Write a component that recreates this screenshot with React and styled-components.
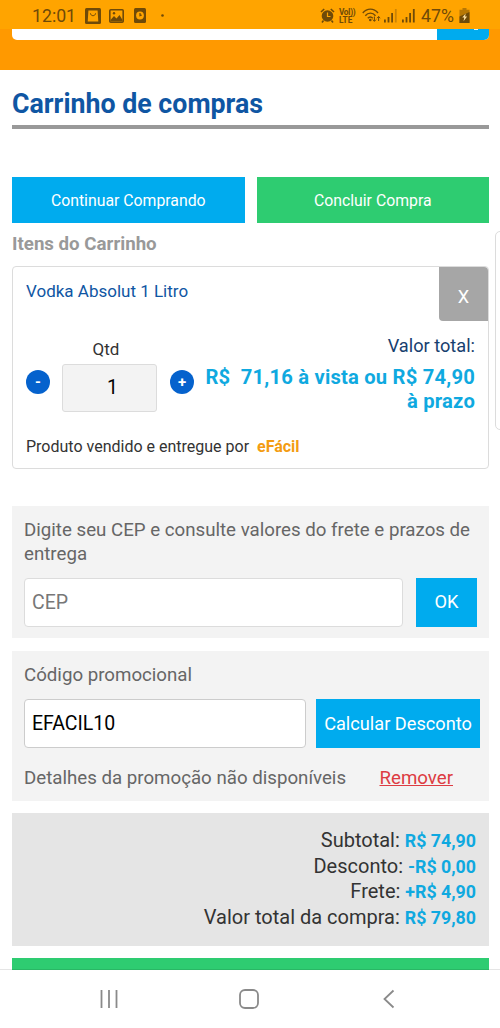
import React, { Component } from 'react';
import styled, { createGlobalStyle } from 'styled-components';

const theme = {
    colors: {
        statusBar: '#ffa400',
        header: '#ff9900',
        sky: '#00abee',
        price: '#0fa9e0',
        blue: '#0f56a3',
        round: '#0562cd',
        green: '#2ecc71',
        panel: '#f3f3f3',
        summary: '#e5e5e5',
        border: '#dcdcdc',
        text: '#666',
        dark: '#333',
        ink: '#6f4a08',
    },
};

const GlobalStyle = createGlobalStyle`
    * {
        box-sizing: border-box;
    }

    body {
        margin: 0;
        background: #fff;
        font-family: Roboto, 'Liberation Sans', sans-serif;
    }

    button,
    input {
        font-family: inherit;
    }
`;

const Screen = styled.div`
    position: relative;
    display: flex;
    flex-direction: column;
    width: 500px;
    height: 1028px;
    overflow: hidden;
    background: #fff;
`;

const StatusBar = styled.div`
    display: flex;
    align-items: center;
    flex: none;
    height: 29px;
    padding: 2px 30px 0 32px;
    background: ${theme.colors.statusBar};
    color: ${theme.colors.ink};
`;

const StatusText = styled.span`
    width: ${props => props.$width}px;
    margin-left: ${props => props.$gap || 0}px;
    font-size: 17.7px;
    font-weight: ${props => props.$weight || 300};
    line-height: 20px;
    white-space: nowrap;
`;

const StatusIcon = styled.svg`
    display: block;
    flex: none;
    margin-left: ${props => props.$gap || 0}px;
`;

const Volte = styled.span`
    width: 17px;
    margin-left: 4px;
    font-size: 8.3px;
    font-weight: 700;
    line-height: 8px;
    letter-spacing: -0.4px;
    white-space: nowrap;
`;

const VolteLine = styled.span`
    display: block;
    height: 8px;
    letter-spacing: ${props => props.$spacing}px;
`;

const Spacer = styled.div`
    flex: 1;
`;

const Header = styled.header`
    flex: none;
    height: 41px;
    padding: 0 11px 0 12px;
    background: ${theme.colors.header};
`;

const SearchBar = styled.div`
    display: flex;
    justify-content: flex-end;
    height: 11px;
    overflow: hidden;
    border-radius: 0 0 5px 5px;
    background: #fff;
`;

const SearchButton = styled.div`
    display: flex;
    justify-content: center;
    width: 52px;
    padding-left: 26px;
    background: ${theme.colors.sky};

    &::before {
        content: '';
        width: 4px;
        height: 1px;
        background: #d9f2fd;
    }
`;

const Content = styled.main`
    display: flex;
    flex-direction: column;
    flex: none;
    height: 900px;
    padding: 0 11px 0 12px;
    overflow: hidden;
`;

const Title = styled.h1`
    margin: 0;
    padding-top: 19px;
    height: 59px;
    flex: none;
    border-bottom: 4px solid #999;
    color: ${theme.colors.blue};
    font-size: 26.75px;
    font-weight: 700;
    line-height: 30px;
`;

const Actions = styled.div`
    display: grid;
    grid-template-columns: 1fr 1fr;
    gap: 12px;
    margin-top: 48px;
`;

const Button = styled.button`
    display: flex;
    align-items: center;
    justify-content: center;
    flex: none;
    width: ${props => (props.$width ? `${props.$width}px` : 'auto')};
    height: ${props => props.$height || 46}px;
    padding: 0 0 ${props => props.$lift || 0}px;
    border: none;
    background: ${props => (props.$green ? theme.colors.green : theme.colors.sky)};
    color: #fff;
    font-size: ${props => props.$size || 15.8}px;
    white-space: nowrap;
`;

const SectionTitle = styled.h2`
    margin: 10px 0 11px;
    color: #999;
    font-size: 18.7px;
    font-weight: 700;
    line-height: 22px;
`;

const Card = styled.section`
    display: flex;
    flex-direction: column;
    flex: none;
    height: 203px;
    border: 1px solid ${theme.colors.border};
    border-radius: 4px;
`;

const CardTop = styled.div`
    display: flex;
    justify-content: space-between;
    padding-left: 13px;
`;

const ProductName = styled.a`
    margin-top: 14px;
    color: ${theme.colors.blue};
    font-size: 17px;
    line-height: 20px;
`;

const RemoveItem = styled.button`
    width: 49px;
    height: 54px;
    padding: 4px 0 0;
    border: none;
    border-radius: 0 4px 0 4px;
    background: #a6a6a6;
    color: #fff;
    font-size: 18.2px;
`;

const CardMiddle = styled.div`
    display: flex;
    justify-content: space-between;
    height: 104px;
    padding: 0 13px;
`;

const Quantity = styled.div`
    display: flex;
    align-items: center;
    flex: none;
    width: 169px;
    height: 48px;
    margin-top: 43px;
`;

const QuantityField = styled.div`
    width: 95px;
    margin: -26px 13px 0 12px;
`;

const QuantityLabel = styled.label`
    display: block;
    padding: 0 7px 1px 0;
    color: ${theme.colors.dark};
    font-size: 17px;
    line-height: 20px;
    text-align: center;
`;

const QuantityInput = styled.input`
    display: block;
    width: 95px;
    height: 48px;
    margin-top: 4px;
    padding: 0 0 0 6px;
    border: 1px solid ${theme.colors.border};
    border-radius: 3px;
    background: #f3f3f3;
    color: #000;
    font-size: 19.5px;
    text-align: center;
`;

const RoundButton = styled.button`
    flex: none;
    width: 24px;
    height: 24px;
    margin-top: -12px;
    padding: 0;
    border: none;
    border-radius: 50%;
    background: ${theme.colors.round};
    color: #fff;
    font-size: 15px;
    font-weight: 700;
    line-height: 23px;
`;

const Total = styled.div`
    width: 280px;
    margin-top: 14px;
    color: #17406f;
    font-size: 18.2px;
    line-height: 22px;
    text-align: right;
`;

const TotalPrice = styled.div`
    margin-top: 8px;
    color: ${theme.colors.price};
    font-size: 20.2px;
    letter-spacing: 0.2px;
    font-weight: 700;
    line-height: 24px;
`;

const Seller = styled.p`
    margin: 12px 0 0 13px;
    color: ${theme.colors.dark};
    font-size: 16px;
    line-height: 20px;

    strong {
        margin-left: 4px;
        color: #f39c12;
    }
`;

const Panel = styled.section`
    flex: none;
    height: ${props => props.$height}px;
    margin-top: ${props => props.$top}px;
    padding: 12px 9px 0 12px;
    background: ${theme.colors.panel};
    color: ${theme.colors.text};
    font-size: 18.7px;
    line-height: 24px;
`;

const FieldRow = styled.div`
    display: flex;
    justify-content: space-between;
    margin-top: 12px;
    padding-right: ${props => props.$right || 0}px;
`;

const Field = styled.input`
    width: ${props => props.$width}px;
    height: 49px;
    padding: 0 7px 1px;
    border: 1px solid ${props => (props.$strong ? '#ccc' : theme.colors.border)};
    border-radius: 4px;
    background: #fff;
    color: #000;
    font-size: 19.5px;

    &::placeholder {
        color: #777;
        opacity: 1;
    }
`;

const PromoDetails = styled.div`
    display: flex;
    justify-content: space-between;
    margin-top: 18px;
    padding-right: 27px;
    white-space: nowrap;
`;

const RemoveLink = styled.a`
    color: #dd3c42;
    text-decoration: underline;
`;

const Summary = styled.section`
    flex: none;
    height: 133px;
    margin-top: 12px;
    padding: 15px 13px 0 0;
    background: ${theme.colors.summary};
    color: ${theme.colors.dark};
    font-size: 20px;
    line-height: 25.5px;
    text-align: right;

    strong {
        color: ${theme.colors.price};
        font-size: 17.8px;
    }
`;

const Checkout = styled.div`
    flex: none;
    height: 46px;
    margin-top: 12px;
    background: ${theme.colors.green};
`;

const NextCard = styled.div`
    position: absolute;
    top: 231px;
    left: 495px;
    width: 20px;
    height: 199px;
    border: 1px solid ${theme.colors.border};
    border-radius: 5px;
    background: #fff;
`;

const NavBar = styled.nav`
    display: flex;
    align-items: center;
    justify-content: space-between;
    flex: 1;
    padding: 0 101px 0 99px;
    box-shadow: 0 -1px 0 rgba(0, 0, 0, 0.1);
    background: #fff;
    z-index: 1;
`;

const NavIcon = styled.svg`
    display: block;
    fill: none;
    stroke: #8a8a8a;
    stroke-width: 1.8;
`;

const totals = [
    { label: 'Subtotal:', value: 'R$ 74,90' },
    { label: 'Desconto:', value: '-R$ 0,00' },
    { label: 'Frete:', value: '+R$ 4,90' },
    { label: 'Valor total da compra:', value: 'R$ 79,80' },
];

const Signal = ({ gap, faded }) => (
    <StatusIcon $gap={gap} width="14" height="15" viewBox="0 0 14 15">
        <g fill={theme.colors.ink}>
            <rect x="0" y="11.5" width="1.8" height="3" />
            <rect x="3.6" y="9" width="1.8" height="5.5" />
            <rect x="7.2" y="5" width="1.8" height="9.5" />
            <rect x="10.9" y="1" width="1.8" height="13.5" opacity={faded ? 0.35 : 1} />
        </g>
    </StatusIcon>
);

const StatusIcons = () => {
    const { ink, statusBar } = theme.colors;
    return (
        <StatusBar>
            <StatusText $width={53} $weight={400}>
                12:01
            </StatusText>
            <StatusIcon width="16" height="16" viewBox="0 0 16 16">
                <rect width="16" height="16" rx="1.5" fill={ink} />
                <path d="M3.4 2.6h9.2l.7 10.8H2.7z" fill={statusBar} />
                <path d="M5.4 5.3c.4 3.2 4.8 3.2 5.2 0" fill="none" stroke={ink} strokeWidth="1" />
            </StatusIcon>
            <StatusIcon $gap={8} width="15" height="14" viewBox="0 0 15 14">
                <rect x=".8" y=".8" width="13.4" height="12.4" rx="1" fill="none" stroke={ink} strokeWidth="1.6" />
                <path d="M1.5 11 5 7l2.5 2.6L10.5 6l3 5v1.5h-12z" fill={ink} />
                <circle cx="5" cy="4.2" r="1.2" fill={ink} />
            </StatusIcon>
            <StatusIcon $gap={10} width="12" height="15" viewBox="0 0 12 15">
                <rect width="12" height="15" rx="1.5" fill={ink} />
                <circle cx="6" cy="7.5" r="3.9" fill={statusBar} />
                <path d="M6 5v2.6l1.8-.6" fill="none" stroke={ink} strokeWidth="1.2" />
            </StatusIcon>
            <StatusIcon $gap={15} width="3" height="3" viewBox="0 0 3 3">
                <circle cx="1.5" cy="1.5" r="1.3" fill={ink} />
            </StatusIcon>
            <Spacer />
            <StatusIcon width="15" height="15" viewBox="0 0 15 15">
                <path d="M1 4 4.2 1M14 4l-3.2-3M3.5 12.5 2 14.4M11.5 12.5l1.5 1.9" stroke={ink} strokeWidth="1.6" />
                <circle cx="7.5" cy="8" r="5.8" fill={ink} />
                <path d="M7.5 4.5v4h3" fill="none" stroke={statusBar} strokeWidth="1.2" />
            </StatusIcon>
            <Volte>
                <VolteLine $spacing={-0.4}>VoI))</VolteLine>
                <VolteLine $spacing={0}>LTE</VolteLine>
            </Volte>
            <StatusIcon $gap={6} width="19" height="15" viewBox="0 0 19 15">
                <g fill="none" stroke={ink} strokeWidth="1.4">
                    <path d="M.8 5C5-.2 11.8-.2 16 5M3.3 7.8c2.8-3.6 7.4-3.6 10.2 0M5.8 10.2c1.5-1.7 3.5-1.7 5 0" />
                    <path d="M12.4 8.5v4.8m-1.6-1.7 1.6 1.7 1.6-1.7M16.6 13V8.5M15 10.2l1.6-1.7 1.6 1.7" strokeWidth="1" />
                </g>
                <circle cx="8.3" cy="12" r="1.3" fill={ink} />
            </StatusIcon>
            <Signal gap={3} faded />
            <Signal gap={4} />
            <StatusText $width={35} $gap={5} $weight={400}>
                47%
            </StatusText>
            <StatusIcon $gap={3} width="11" height="15" viewBox="0 0 10 15">
                <path d="M3 0h4v1.8h3V15H0V1.8h3z" fill={ink} opacity=".5" />
                <path d="M0 8.5 10 4v11H0z" fill={ink} />
                <path d="M6.2 5.5 2.8 9.6h2l-.8 3.6 3.6-4.8h-2z" fill="#ffe0a0" />
            </StatusIcon>
        </StatusBar>
    );
};

export default class App extends Component {
    state = { quantity: 1, cep: '', promo: 'EFACIL10' };

    handleStep = step => () => {
        this.setState(({ quantity }) => ({ quantity: Math.max(1, quantity + step) }));
    };

    handleChange = name => event => {
        this.setState({ [name]: event.target.value });
    };

    render() {
        const { quantity, cep, promo } = this.state;
        return (
            <Screen>
                <GlobalStyle />
                <StatusIcons />
                <Header>
                    <SearchBar>
                        <SearchButton />
                    </SearchBar>
                </Header>
                <Content>
                    <Title>Carrinho de compras</Title>
                    <Actions>
                        <Button>Continuar Comprando</Button>
                        <Button $green>Concluir Compra</Button>
                    </Actions>
                    <SectionTitle>Itens do Carrinho</SectionTitle>
                    <Card>
                        <CardTop>
                            <ProductName>Vodka Absolut 1 Litro</ProductName>
                            <RemoveItem>X</RemoveItem>
                        </CardTop>
                        <CardMiddle>
                            <Quantity>
                                <RoundButton onClick={this.handleStep(-1)}>-</RoundButton>
                                <QuantityField>
                                    <QuantityLabel htmlFor="quantity">Qtd</QuantityLabel>
                                    <QuantityInput id="quantity" value={quantity} readOnly />
                                </QuantityField>
                                <RoundButton onClick={this.handleStep(1)}>+</RoundButton>
                            </Quantity>
                            <Total>
                                Valor total:
                                <TotalPrice>R$&nbsp; 71,16 à vista ou R$ 74,90 à&nbsp;prazo</TotalPrice>
                            </Total>
                        </CardMiddle>
                        <Seller>
                            Produto vendido e entregue por <strong>eFácil</strong>
                        </Seller>
                    </Card>
                    <Panel $top={37} $height={132}>
                        Digite seu CEP e consulte valores do frete e prazos de entrega
                        <FieldRow $right={3}>
                            <Field
                                $width={379}
                                placeholder="CEP"
                                value={cep}
                                onChange={this.handleChange('cep')}
                            />
                            <Button $width={61} $height={49} $size={18.2} $lift={3}>
                                OK
                            </Button>
                        </FieldRow>
                    </Panel>
                    <Panel $top={13} $height={150}>
                        Código promocional
                        <FieldRow>
                            <Field $strong $width={282} value={promo} onChange={this.handleChange('promo')} />
                            <Button $width={164} $height={49} $size={18.2}>
                                Calcular Desconto
                            </Button>
                        </FieldRow>
                        <PromoDetails>
                            <span>Detalhes da promoção não disponíveis</span>
                            <RemoveLink>Remover</RemoveLink>
                        </PromoDetails>
                    </Panel>
                    <Summary>
                        {totals.map(total => (
                            <div key={total.label}>
                                {total.label} <strong>{total.value}</strong>
                            </div>
                        ))}
                    </Summary>
                    <Checkout />
                </Content>
                <NextCard />
                <NavBar>
                    <NavIcon width="20" height="20" viewBox="0 0 20 20">
                        <path d="M2.5 1v18M10 1v18M17.5 1v18" />
                    </NavIcon>
                    <NavIcon width="20" height="20" viewBox="0 0 20 20">
                        <rect x="1" y="1" width="18" height="18" rx="5" />
                    </NavIcon>
                    <NavIcon width="20" height="20" viewBox="0 0 20 20">
                        <path d="M14.5 1.5 5.5 10l9 8.5" />
                    </NavIcon>
                </NavBar>
            </Screen>
        );
    }
}
